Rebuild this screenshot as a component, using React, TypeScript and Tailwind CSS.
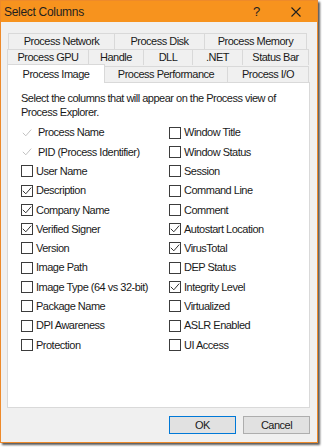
const font = { fontFamily: '"Liberation Sans", Arial, sans-serif' };

type Item = { label: string; checked?: boolean; disabled?: boolean };

const left: Item[] = [
  { label: "Process Name", checked: true, disabled: true },
  { label: "PID (Process Identifier)", checked: true, disabled: true },
  { label: "User Name" },
  { label: "Description", checked: true },
  { label: "Company Name", checked: true },
  { label: "Verified Signer", checked: true },
  { label: "Version" },
  { label: "Image Path" },
  { label: "Image Type (64 vs 32-bit)" },
  { label: "Package Name" },
  { label: "DPI Awareness" },
  { label: "Protection" },
];

const right: Item[] = [
  { label: "Window Title" },
  { label: "Window Status" },
  { label: "Session" },
  { label: "Command Line" },
  { label: "Comment" },
  { label: "Autostart Location", checked: true },
  { label: "VirusTotal", checked: true },
  { label: "DEP Status" },
  { label: "Integrity Level", checked: true },
  { label: "Virtualized" },
  { label: "ASLR Enabled" },
  { label: "UI Access" },
];

function Check({ item }: { item: Item }) {
  const box = item.disabled ? "border-transparent" : "border-[#3c3c3c]";
  const stroke = item.disabled ? "#c2c2c2" : "#333333";
  return (
    <div className="flex items-center h-[19.3px]">
      <div className={`w-[12px] h-[12px] border bg-white flex items-center justify-center ${box}`}>
        {item.checked && (
          <svg width="10" height="10" viewBox="0 0 10 10">
            <polyline points="0.8,4.8 3.8,7.8 9.2,1.6" fill="none" stroke={stroke} strokeWidth="1" />
          </svg>
        )}
      </div>
      <span className={`text-[#1a1a1a] ${item.disabled ? "ml-[5px]" : "ml-[3px]"}`}>{item.label}</span>
    </div>
  );
}

function Tab({ label, w }: { label: string; w: string }) {
  return (
    <div className={`${w} h-[16px] border-t border-l border-r border-[#d9d9d9] -ml-px first:ml-0 flex items-center justify-center bg-[#f0f0f0] text-[#1a1a1a]`}>
      {label}
    </div>
  );
}

export default function App() {
  return (
    <div className="w-[322px] h-[447px] bg-white text-[11px] tracking-[-0.5px]" style={font}>
      <div className="w-[318px] h-[443px] border border-[#ee8a2a] bg-[#f0f0f0] flex flex-col shadow-[2px_2px_2px_rgba(0,0,0,0.65)]">
        <div className="h-[21px] bg-[#f7931e] flex items-center pl-[3px] text-[12px] text-[#1f1f1f] tracking-[-0.3px]">
          <span>Select Columns</span>
          <span className="ml-auto mr-[31px] text-[13px]">?</span>
          <svg width="10" height="10" viewBox="0 0 10 10" className="mr-[16px]">
            <path d="M0.5 0.5 L9.5 9.5 M9.5 0.5 L0.5 9.5" stroke="#1f1f1f" strokeWidth="1.1" />
          </svg>
        </div>

        <div className="mt-[11px] ml-[6px] w-[302px] flex flex-col">
          <div className="flex ml-[1px]">
            <Tab label="Process Network" w="w-[107px]" />
            <Tab label="Process Disk" w="w-[91px]" />
            <Tab label="Process Memory" w="w-[103px]" />
          </div>
          <div className="flex">
            <Tab label="Process GPU" w="w-[82px]" />
            <Tab label="Handle" w="w-[56px]" />
            <Tab label="DLL" w="w-[50px]" />
            <Tab label=".NET" w="w-[51px]" />
            <Tab label="Status Bar" w="w-[67px]" />
          </div>
          <div className="flex items-end h-[17px]">
            <div className="w-[98px] h-[19px] -mb-px relative z-10 bg-white border-t border-l border-r border-[#d9d9d9] flex items-center justify-center text-[#1a1a1a]">
              Process Image
            </div>
            <Tab label="Process Performance" w="w-[124px]" />
            <Tab label="Process I/O" w="w-[82px]" />
          </div>
        </div>

        <div className="ml-[6px] w-[303px] h-[326px] bg-white border border-[#d9d9d9] pl-[13px] pt-[8px]">
          <p className="leading-[14px] text-[#1a1a1a]">
            Select the columns that will appear on the Process view of
            <br />
            Process Explorer.
          </p>
          <div className="mt-[4px] flex">
            <div className="w-[148px] flex flex-col">
              {left.map((i) => (
                <Check key={i.label} item={i} />
              ))}
            </div>
            <div className="flex flex-col">
              {right.map((i) => (
                <Check key={i.label} item={i} />
              ))}
            </div>
          </div>
        </div>

        <div className="mt-[8px] flex justify-end gap-[7px] mr-[7px]">
          <button className="w-[67px] h-[18px] bg-[#e1e1e1] border border-[#0078d7] text-[#1a1a1a] flex items-center justify-center">
            OK
          </button>
          <button className="w-[67px] h-[18px] bg-[#e1e1e1] border border-[#adadad] text-[#1a1a1a] flex items-center justify-center">
            Cancel
          </button>
        </div>
      </div>
    </div>
  );
}
